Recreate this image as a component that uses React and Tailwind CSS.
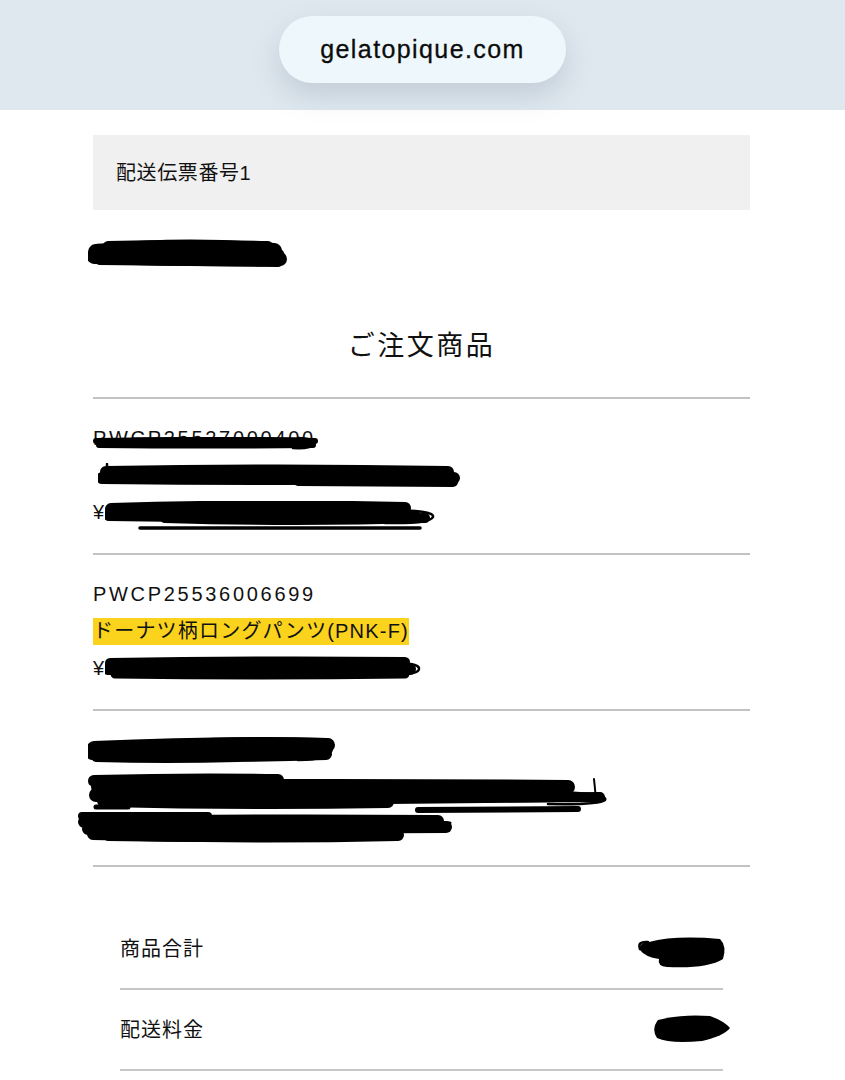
import React from "react";

function Marker({ className, w, h, strokes = [], loops = [], fills = [] }) {
  return (
    <svg
      className={className}
      width={w}
      height={h}
      viewBox={`0 0 ${w} ${h}`}
      fill="none"
      aria-hidden="true"
    >
      {fills.map((d, i) => (
        <path key={"f" + i} d={d} fill="#000" />
      ))}
      {strokes.map(([x1, y1, x2, y2, sw, b], i) => (
        <path
          key={"s" + i}
          d={`M${x1} ${y1} Q${(x1 + x2) / 2} ${(y1 + y2) / 2 + b} ${x2} ${y2}`}
          stroke="#000"
          strokeWidth={sw}
          strokeLinecap="round"
        />
      ))}
      {loops.map((d, i) => (
        <path
          key={"l" + i}
          d={d}
          stroke="#000"
          strokeWidth={2.5}
          strokeLinecap="round"
          fill="none"
        />
      ))}
    </svg>
  );
}

export default function App() {
  return (
    <div
      className="min-h-[1080px] w-full bg-white text-[#111]"
      style={{ fontFamily: '"Liberation Sans","Noto Sans CJK JP",sans-serif' }}
    >
      {/* browser address bar */}
      <div className="relative z-10 flex h-[110px] justify-center bg-[#dfe8ef] pt-[16px]">
        <div className="flex h-[67px] w-[287px] items-center justify-center rounded-full bg-[#eef7fb] text-[25px] tracking-[1.4px] text-[#0c0c0c] shadow-[0_12px_28px_rgba(90,110,130,0.22)] [-webkit-text-stroke:0.3px_#0c0c0c]">
          gelatopique.com
        </div>
      </div>

      <div className="ml-[93px] w-[657px]">
        {/* shipping number header */}
        <div className="mt-[25px] flex h-[75px] items-center bg-[#f0f0f0] pl-[23px] text-[20px] tracking-[0.6px]">
          配送伝票番号1
        </div>

        {/* redacted tracking number */}
        <div className="relative mt-[28px] h-[30px]">
          <Marker
            className="absolute left-[-5px] top-[-2px]"
            w={200}
            h={34}
            strokes={[
              [8, 16, 186, 15, 16, -8],
              [6, 21, 192, 23, 14, 2],
              [20, 10, 180, 10, 10, -2],
              [12, 25, 190, 27, 8, 0],
            ]}
            loops={["M176 10 Q197 12 195 20 Q192 30 168 29", "M5 18 Q2 11 10 9"]}
          />
        </div>

        {/* heading */}
        <div className="mt-[58px] border-b-2 border-[#c2c2c2] pb-[31px] text-center text-[27px] leading-[40px] tracking-[2.5px]">
          ご注文商品
        </div>

        {/* item 1 */}
        <div className="border-b-2 border-[#c2c2c2] pb-[22px] pt-[21px] text-[20px]">
          <div className="relative h-[37px] leading-[37px] tracking-[2.7px]">
            PWCP25527000400
            <Marker
              className="absolute left-[0px] top-[15px]"
              w={226}
              h={16}
              strokes={[
                [3, 6, 222, 6, 6, -2],
                [6, 10, 220, 10, 6, 1],
                [40, 4, 210, 4, 3, -1],
              ]}
              loops={["M205 3 Q224 4 221 9 Q218 14 200 13"]}
            />
          </div>
          <div className="relative h-[37px]">
            <Marker
              className="absolute left-[5px] top-[6px]"
              w={362}
              h={26}
              strokes={[
                [8, 9, 350, 9, 12, -3],
                [4, 15, 356, 15, 12, 2],
                [200, 18, 355, 19, 10, 0],
                [10, 12, 340, 12, 10, 0],
                [9, 1, 9, 19, 2.5, 0],
              ]}
              loops={["M330 7 Q360 8 357 14 Q354 21 320 20"]}
            />
          </div>
          <div className="relative h-[37px] leading-[37px]">
            ¥
            <Marker
              className="absolute left-[12px] top-[7px]"
              w={332}
              h={30}
              strokes={[
                [6, 8, 300, 7, 12, -4],
                [4, 14, 310, 15, 12, 2],
                [60, 17, 320, 17, 10, 4],
                [35, 27, 315, 27, 3.5, 0],
              ]}
              loops={["M280 9 Q330 9 328 16 Q325 23 280 22"]}
            />
          </div>
        </div>

        {/* item 2 */}
        <div className="border-b-2 border-[#c2c2c2] pb-[22px] pt-[21px] text-[20px]">
          <div className="h-[37px] leading-[37px] tracking-[2.7px]">PWCP25536006699</div>
          <div className="flex h-[37px] items-center tracking-[1.2px]">
            <span className="bg-[#fbd21c] leading-[27px]">ドーナツ柄ロングパンツ(PNK-F)</span>
          </div>
          <div className="relative h-[37px] leading-[37px]">
            ¥
            <Marker
              className="absolute left-[12px] top-[6px]"
              w={318}
              h={25}
              strokes={[
                [5, 7, 300, 6, 10, -2],
                [3, 13, 305, 13, 12, 0],
                [10, 18, 300, 18, 9, 2],
              ]}
              loops={["M295 7 Q315 8 314 13 Q313 18 296 18"]}
            />
          </div>
        </div>

        {/* item 3 */}
        <div className="border-b-2 border-[#c2c2c2] pb-[22px] pt-[21px] text-[20px]">
          <div className="relative h-[37px]">
            <Marker
              className="absolute left-[-5px] top-[3px]"
              w={250}
              h={30}
              strokes={[
                [6, 13, 240, 10, 14, -4],
                [4, 19, 238, 19, 12, 4],
                [120, 8, 238, 8, 10, -2],
                [8, 23, 150, 23, 8, 2],
                [7, 8, 7, 24, 2.5, 0],
              ]}
              loops={["M215 5 Q246 5 244 14 Q242 25 210 25"]}
            />
          </div>
          <div className="relative h-[37px]">
            <Marker
              className="absolute left-[-5px] top-[4px]"
              w={524}
              h={44}
              strokes={[
                [6, 8, 190, 7, 12, -2],
                [10, 14, 480, 14, 14, -2],
                [8, 22, 470, 22, 14, 2],
                [15, 28, 300, 29, 12, 3],
                [300, 26, 512, 24, 10, 0],
                [330, 37, 490, 36, 6, 0],
                [8, 34, 40, 34, 5, 0],
                [506, 6, 508, 26, 2, 0],
              ]}
              loops={["M470 19 Q521 21 517 27 Q511 32 460 31"]}
            />
          </div>
          <div className="relative h-[37px]">
            <Marker
              className="absolute left-[-15px] top-[4px]"
              w={376}
              h={34}
              strokes={[
                [4, 6, 130, 6, 8, 0],
                [6, 12, 360, 11, 12, -2],
                [10, 19, 368, 17, 12, 0],
                [15, 24, 320, 25, 12, 4],
                [30, 28, 260, 28, 6, 2],
                [355, 12, 372, 13, 3, 0],
              ]}
            />
          </div>
        </div>

        {/* totals */}
        <div className="mx-[27px] mt-[42px] text-[20px] tracking-[1px]">
          <div className="relative flex h-[81px] items-center border-b-2 border-[#c6c6c6]">
            商品合計
            <Marker
              className="absolute left-[515px] top-[25px]"
              w={92}
              h={37}
              fills={[
                "M14 8 Q40 1 85 5 Q92 12 88 25 Q72 35 32 33 Q22 32 24 25 Q10 23 5 16 Q4 8 14 8 Z",
              ]}
              loops={["M5 15 Q2 7 13 8"]}
            />
          </div>
          <div className="relative flex h-[81px] items-center border-b-2 border-[#c6c6c6]">
            配送料金
            <Marker
              className="absolute left-[530px] top-[23px]"
              w={82}
              h={32}
              fills={["M8 7 Q30 1 60 3 Q74 8 80 15 Q74 23 52 28 Q20 31 7 25 Q1 16 8 7 Z"]}
            />
          </div>
        </div>
      </div>
    </div>
  );
}
